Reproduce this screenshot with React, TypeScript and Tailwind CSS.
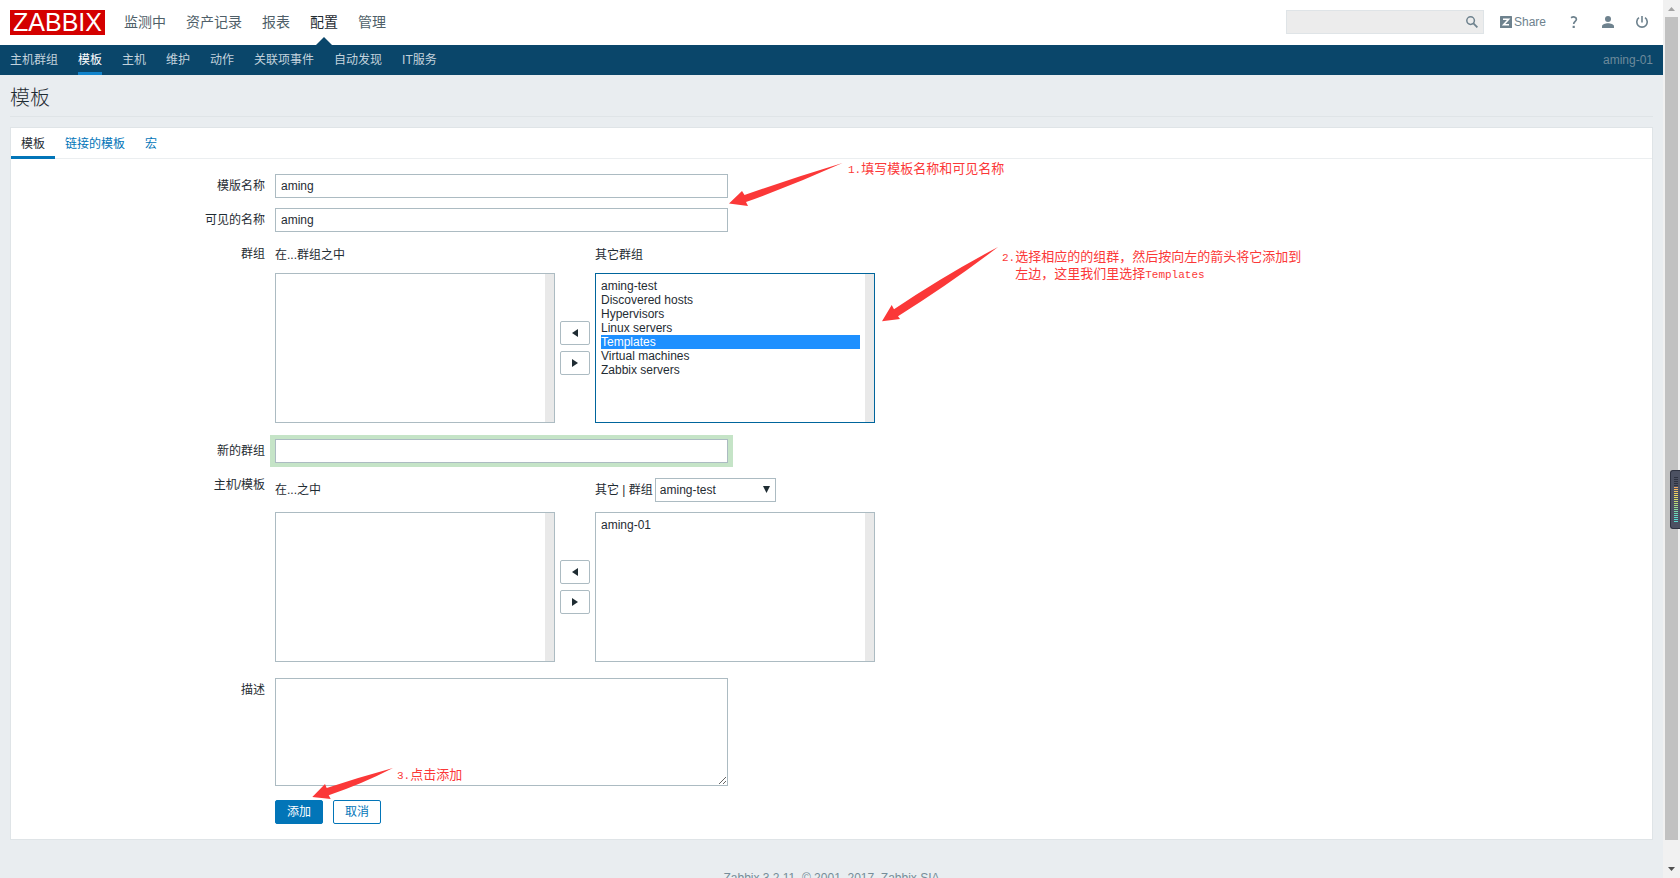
import React from 'react';

const SANS = "font-['Liberation_Sans','Noto_Sans_CJK_SC',sans-serif]";

const mainMenu = ['监测中', '资产记录', '报表', '配置', '管理'];
const subMenu = ['主机群组', '模板', '主机', '维护', '动作', '关联项事件', '自动发现', 'IT服务'];
const tabs = ['模板', '链接的模板', '宏'];
const otherGroups = [
  'aming-test',
  'Discovered hosts',
  'Hypervisors',
  'Linux servers',
  'Templates',
  'Virtual machines',
  'Zabbix servers'
];

interface RowProps {
  label: string;
  htmlFor: string;
  children: React.ReactNode;
}

function Row({ label, htmlFor, children }: RowProps) {
  return (
    <div className="flex items-start gap-[10px]">
      <label htmlFor={htmlFor} className="w-[254px] shrink-0 text-right leading-6">
        {label}
      </label>
      {children}
    </div>
  );
}

interface ListBoxProps {
  id: string;
  label: string;
  options?: string[];
  selected?: string[];
  active?: boolean;
}

function ListBox({ id, label, options = [], selected = [], active = false }: ListBoxProps) {
  return (
    <div className={`flex h-[150px] w-[280px] border bg-white ${active ? 'border-[#00659c]' : 'border-[#acbbc2]'}`}>
      <select
        id={id}
        aria-label={label}
        multiple
        defaultValue={selected}
        className="h-full min-w-0 flex-1 appearance-none overflow-hidden bg-white p-[5px] outline-none"
      >
        {options.map((name) => (
          <option
            key={name}
            value={name}
            className="h-[14px] min-h-0 p-0 leading-[14px] checked:bg-[linear-gradient(#1e90ff,#1e90ff)] checked:[-webkit-text-fill-color:white]"
          >
            {name}
          </option>
        ))}
      </select>
      <div className="w-[9px] bg-[#e9e9e9]" />
    </div>
  );
}

function MoveButtons() {
  const style =
    'flex h-6 w-[30px] items-center justify-center rounded-[2px] border border-[#acbbc2] bg-white text-[#1f2c33]';
  return (
    <div className="flex flex-col gap-[6px]">
      <button type="button" aria-label="添加到左边" className={style}>
        <svg width="6" height="8" viewBox="0 0 6 8" fill="currentColor">
          <path d="M6 0v8L0 4z" />
        </svg>
      </button>
      <button type="button" aria-label="移到右边" className={style}>
        <svg width="6" height="8" viewBox="0 0 6 8" fill="currentColor">
          <path d="M0 0v8l6-4z" />
        </svg>
      </button>
    </div>
  );
}

function Header() {
  return (
    <header>
      <div className="flex h-[45px] items-center justify-between bg-white px-[10px]">
        <div className="flex items-center">
          <a
            href="#"
            className="flex h-[25px] w-[95px] items-center justify-center bg-[#d40000] text-[25px] leading-[25px] text-white"
          >
            ZABBIX
          </a>
          <nav className="ml-[19px] flex gap-5 text-[14px] leading-[45px]">
            {mainMenu.map((item) => (
              <a
                key={item}
                href="#"
                className={item === '配置' ? 'relative text-[#1f2c33]' : 'text-[#4f5f69]'}
              >
                {item}
                {item === '配置' && (
                  <svg
                    className="absolute bottom-0 left-1/2 -translate-x-1/2"
                    width="16"
                    height="8"
                    viewBox="0 0 16 8"
                    fill="#0a466a"
                  >
                    <path d="M0 8L8 0l8 8z" />
                  </svg>
                )}
              </a>
            ))}
          </nav>
        </div>

        {/* Search and user links */}
        <div className="flex items-center pb-px text-[#6e828e]">
          <div className="flex h-6 w-[198px] items-center border border-[#dfe4e7] bg-[#ececec] pr-[5px]">
            <input type="text" aria-label="搜索" className="h-full min-w-0 flex-1 bg-transparent px-[5px] outline-none" />
            <button type="button" aria-label="搜索">
              <svg width="12" height="12" viewBox="0 0 12 12" fill="none" stroke="currentColor">
                <circle cx="4.600" cy="4.600" r="3.800" strokeWidth="1.5" />
                <path d="M7.400 7.400l4 4" strokeWidth="1.800" />
              </svg>
            </button>
          </div>
          <a href="#" className="ml-4 flex items-center gap-[2px]">
            <svg width="12" height="12" viewBox="0 0 12 12">
              <rect width="12" height="12" rx="0.5" fill="currentColor" />
              <path d="M3 3.200h5.600L3.600 8.800H9" fill="none" stroke="#fff" strokeWidth="1.600" />
            </svg>
            Share
          </a>
          <a href="#" aria-label="帮助" className="ml-6">
            <svg width="8" height="12" viewBox="0 0 8 12" fill="none" stroke="currentColor">
              <path d="M1 1.700C3.200.4 6.400.8 6.400 3.200 6.400 5.300 3.700 5.300 3.700 8" strokeWidth="1.700" />
              <path d="M3.700 9.800v2.200" strokeWidth="2.200" />
            </svg>
          </a>
          <a href="#" aria-label="用户" className="ml-6">
            <svg width="12" height="12" viewBox="0 0 12 12" fill="currentColor">
              <circle cx="6" cy="3" r="3" />
              <path d="M0 12v-1.600C0 8.200 3.500 7.300 6 7.300s6 .9 6 3.100V12z" />
            </svg>
          </a>
          <a href="#" aria-label="退出" className="mr-[5px] ml-[22px]">
            <svg width="12" height="12" viewBox="0 0 12 12" fill="none" stroke="currentColor" strokeWidth="1.600">
              <path d="M3 1.700a5.200 5.200 0 1 0 6 0M6 0v6.500" />
            </svg>
          </a>
        </div>
      </div>

      <div className="flex h-[30px] justify-between bg-[#0a466a] px-[10px]">
        <nav className="flex gap-5 leading-[31px]">
          {subMenu.map((item) => (
            <a
              key={item}
              href="#"
              className={item === '模板' ? 'border-b-3 border-[#1183cb] text-white' : 'text-[#c3d3dd]'}
            >
              {item}
            </a>
          ))}
        </nav>
        <span className="leading-[30px] text-[#6d8a9b]">aming-01</span>
      </div>
    </header>
  );
}

function TemplateForm() {
  return (
    <form className="flex flex-col pt-[15px] pb-[15px]">
      <Row label="模版名称" htmlFor="template_name">
        <input
          id="template_name"
          type="text"
          defaultValue="aming"
          className="h-6 w-[453px] border border-[#acbbc2] px-[5px] outline-none"
        />
      </Row>
      <div className="mt-[10px]">
        <Row label="可见的名称" htmlFor="visible_name">
          <input
            id="visible_name"
            type="text"
            defaultValue="aming"
            className="h-6 w-[453px] border border-[#acbbc2] px-[5px] outline-none"
          />
        </Row>
      </div>

      <div className="mt-[10px]">
        <Row label="群组" htmlFor="groups">
          <div className="grid grid-cols-[280px_30px_280px] items-center gap-x-[5px] gap-y-[5px]">
            <span className="leading-[26px]">在...群组之中</span>
            <span />
            <span className="leading-[26px]">其它群组</span>
            <ListBox id="groups" label="在群组之中" />
            <MoveButtons />
            <ListBox id="other_groups" label="其它群组" options={otherGroups} selected={['Templates']} active />
          </div>
        </Row>
      </div>

      <div className="mt-4">
        <Row label="新的群组" htmlFor="new_group">
          <input
            id="new_group"
            type="text"
            className="h-6 w-[453px] border border-[#acbbc2] px-[5px] shadow-[-1px_0_0_4px_#c5e4c7,1px_0_0_4px_#c5e4c7] outline-none"
          />
        </Row>
      </div>

      <div className="mt-[10px]">
        <Row label="主机/模板" htmlFor="hosts">
          <div className="mt-[5px] grid grid-cols-[280px_30px_280px] items-center gap-x-[5px] gap-y-[10px]">
            <span>在...之中</span>
            <span />
            <div className="flex items-center gap-[2px]">
              <label htmlFor="group_filter">其它 | 群组</label>
              <div className="relative">
                <select
                  id="group_filter"
                  className="block h-6 w-[121px] appearance-none border border-[#acbbc2] bg-white px-1 outline-none"
                >
                  <option>aming-test</option>
                </select>
                <svg
                  className="pointer-events-none absolute top-2 right-[6px]"
                  width="7"
                  height="7"
                  viewBox="0 0 7 7"
                  fill="#1f2c33"
                >
                  <path d="M0 0h7L3.500 7z" />
                </svg>
              </div>
            </div>
            <ListBox id="hosts" label="在之中" />
            <MoveButtons />
            <ListBox id="other_hosts" label="其它" options={['aming-01']} />
          </div>
        </Row>
      </div>

      <div className="mt-4">
        <Row label="描述" htmlFor="description">
          <textarea
            id="description"
            className="block h-[108px] w-[453px] resize border border-[#acbbc2] p-[5px] outline-none"
          />
        </Row>
      </div>

      <div className="mt-[14px] ml-[264px] flex gap-[10px]">
        <button type="button" className="h-6 w-12 rounded-[2px] border border-[#0275b8] bg-[#0275b8] text-white">
          添加
        </button>
        <button type="button" className="h-6 w-12 rounded-[2px] border border-[#0275b8] bg-white text-[#0275b8]">
          取消
        </button>
      </div>
    </form>
  );
}

// Tutorial notes drawn over the form
function Annotations() {
  const note =
    "absolute flex items-baseline whitespace-nowrap font-['Noto_Sans_CJK_SC',sans-serif] text-[13px] leading-[17px] text-[#fb3838]";
  const latin = "font-['Liberation_Mono',monospace] text-[11px]";
  return (
    <div className="pointer-events-none absolute inset-0">
      <svg className="absolute top-0 left-0" width="1010" height="810" viewBox="0 0 1010 810" fill="#fb3838">
        <path d="M729 203.500L742 191l2.500 4Q793 178 842.500 163 796 184 746 202l2 4z" />
        <path d="M882 321.200L891.700 305l2.300 4.200Q945 275 998 247 951 283 898 316.200l2 2.800z" />
        <path d="M312.300 797L325 784l1.700 4Q360 777 393 768 362 784 328.700 795.200l2 3.800z" />
      </svg>
      <p className={`${note} top-[159px] left-[848px]`}>
        <span className={latin}>1.</span>
        <span>填写模板名称和可见名称</span>
      </p>
      <p className={`${note} top-[247px] left-[1002px]`}>
        <span className={latin}>2.</span>
        <span>
          选择相应的的组群，然后按向左的箭头将它添加到
          <br />
          左边，这里我们里选择<span className={latin}>Templates</span>
        </span>
      </p>
      <p className={`${note} top-[765px] left-[397px]`}>
        <span className={latin}>3.</span>
        <span>点击添加</span>
      </p>
    </div>
  );
}

function ScrollBar() {
  return (
    <div className="flex w-[17px] shrink-0 flex-col items-center bg-[#f1f1f1]">
      <div className="flex h-[17px] items-center justify-center">
        <svg width="7" height="4" viewBox="0 0 7 4" fill="#a3a3a3">
          <path d="M0 4L3.500 0 7 4z" />
        </svg>
      </div>
      <div className="w-[13px] flex-1 bg-[#c1c1c1]" />
      <div className="flex h-[38px] items-end pb-[7px]">
        <svg width="7" height="4" viewBox="0 0 7 4" fill="#505050">
          <path d="M0 0h7L3.500 4z" />
        </svg>
      </div>
    </div>
  );
}

// Level meter docked to the right edge of the screen
function DockedMeter() {
  const bars = [
    '#2e3240', '#2e3240', '#2e3240', '#2e3240', '#2e3240', '#f0a860', '#f0b860', '#f0c860',
    '#f0d460', '#ecdc60', '#e0dc60', '#d4dc68', '#c8dc70', '#b8dc78', '#a8dc84', '#98dc90',
    '#88dc9c', '#78dca8', '#70dcb4', '#68dcc0', '#60dcc8', '#58dcd0', '#58dcd0'
  ];
  return (
    <div className="absolute top-[470px] right-0 flex h-[59px] w-[10px] flex-col items-center gap-px rounded-l-[3px] border border-r-0 border-[#2e3240] bg-[#4c5162] pt-[6px]">
      {bars.map((color, i) => (
        <div key={i} className="h-px w-1 shrink-0" style={{ backgroundColor: color }} />
      ))}
    </div>
  );
}

export default function App() {
  return (
    <div className={`relative flex h-screen overflow-hidden bg-[#e9edf0] text-[12px] leading-[14px] text-[#1f2c33] ${SANS}`}>
      <div className="min-w-0 flex-1 overflow-hidden">
        <Header />
        <main className="px-[10px]">
          <h1 className="mb-[10px] border-b border-[#dfe4e7] pt-2 pb-[3px] text-[20px] leading-[30px] font-light">模板</h1>
          <section className="border border-[#dfe4e7] bg-white">
            <div className="flex h-[31px] border-b border-[#ebeef0]">
              {tabs.map((tab, i) => (
                <a
                  key={tab}
                  href="#"
                  className={
                    i === 0
                      ? 'h-[31px] border-b-3 border-[#0275b8] px-[10px] leading-8'
                      : 'px-[10px] leading-8 text-[#0275b8]'
                  }
                >
                  {tab}
                </a>
              ))}
            </div>
            <TemplateForm />
          </section>
        </main>
        <footer className="pt-[31px] text-center text-[#768d99]">Zabbix 3.2.11. © 2001–2017, Zabbix SIA</footer>
      </div>
      <ScrollBar />
      <Annotations />
      <DockedMeter />
    </div>
  );
}
